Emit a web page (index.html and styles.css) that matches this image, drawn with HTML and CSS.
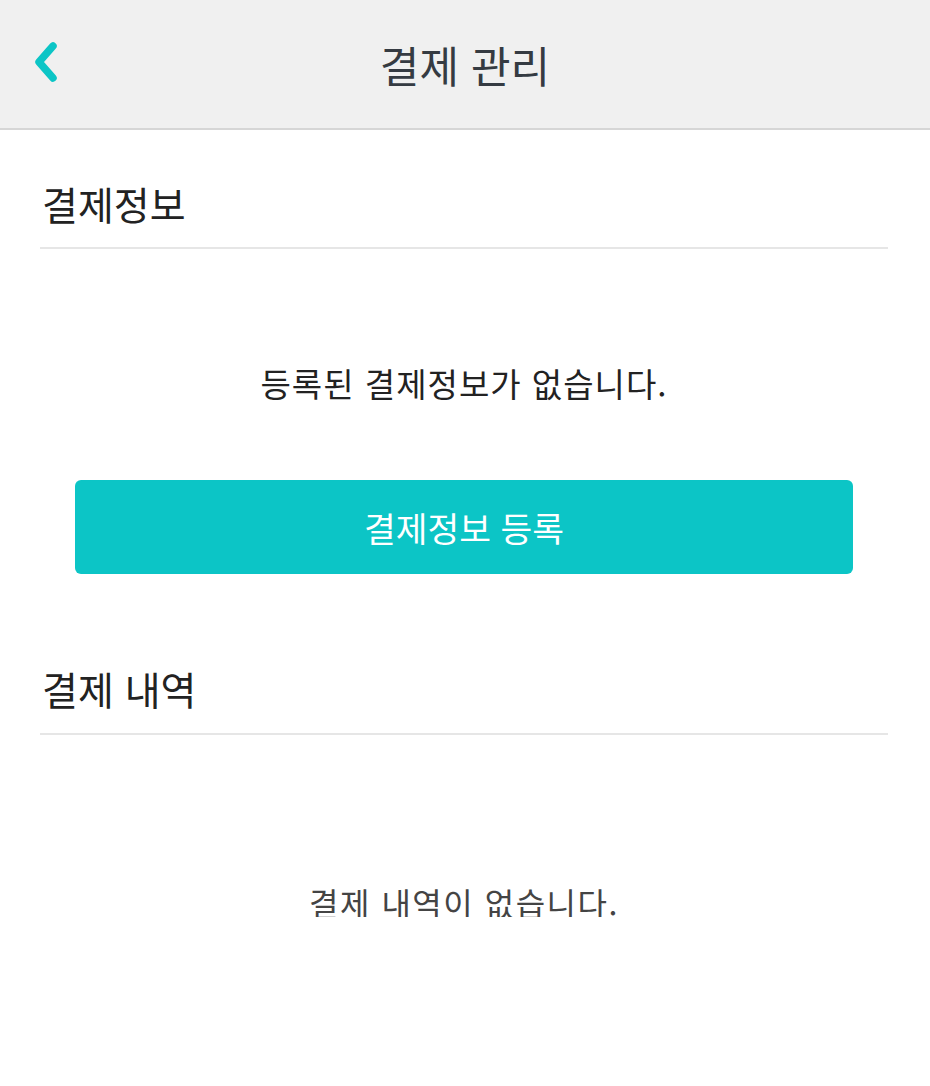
FILE: index.html
```html
<!DOCTYPE html>
<html lang="ko">
<head>
    <meta charset="UTF-8">
    <title>결제 관리</title>
    <link rel="stylesheet" href="styles.css">
</head>
<body>
    <div class="header">
        <a class="back" href="#">
            <svg width="30" height="44" viewBox="0 0 30 44">
                <polyline points="21,6 7,22 21,38" fill="none" stroke="#0cc5c6" stroke-width="7.5" stroke-linecap="round" stroke-linejoin="round"/>
            </svg>
        </a>
        <h1>결제 관리</h1>
    </div>
    <div class="content">
        <!-- 결제정보 -->
        <h2 class="section-title">결제정보</h2>
        <p class="empty empty-info">등록된 결제정보가 없습니다.</p>
        <button class="btn-register" type="button">결제정보 등록</button>

        <!-- 결제 내역 -->
        <h2 class="section-title section-history">결제 내역</h2>
        <p class="empty empty-history">결제 내역이 없습니다.</p>
    </div>
</body>
</html>
```

FILE: styles.css
```css
/* 결제 관리 화면 */
body {
    margin: 0;
    background: #fff;
    font-family: "Noto Sans CJK KR", "Noto Sans", sans-serif;
    color: #222;
}
.header {
    position: relative;
    height: 128px;
    background: #f0f0f0;
    border-bottom: 2px solid #d6d6d6;
    display: flex;
    align-items: center;
    justify-content: center;
}
.header h1 {
    margin: 0;
    font-size: 43px;
    font-weight: 400;
    line-height: 1;
    color: #353b42;
}
.back {
    position: absolute;
    left: 32px;
    top: 40px;
    display: block;
}
.back svg {
    display: block;
}
.content {
    padding: 0 42px 0 40px;
}
.section-title {
    margin: 55px 0 0;
    padding: 0 0 26px 2px;
    font-size: 39px;
    font-weight: 400;
    line-height: 36px;
    border-bottom: 2px solid #e6e6e6;
}
.section-history {
    margin-top: 96px;
    padding-bottom: 27px;
}
.empty {
    margin: 0;
    text-align: center;
    line-height: 30px;
}
.empty-info {
    margin-top: 119px;
    font-size: 33px;
    letter-spacing: 1px;
    color: #222;
}
.empty-history {
    margin-top: 152px;
    font-size: 32px;
    letter-spacing: 1.5px;
    color: #444;
}
.btn-register {
    display: block;
    width: 778px;
    height: 94px;
    margin: 82px auto 0;
    padding: 0;
    border: none;
    border-radius: 6px;
    background: #0cc5c6;
    color: #fff;
    font-family: inherit;
    font-size: 34.5px;
    line-height: 1;
    cursor: pointer;
}
```
